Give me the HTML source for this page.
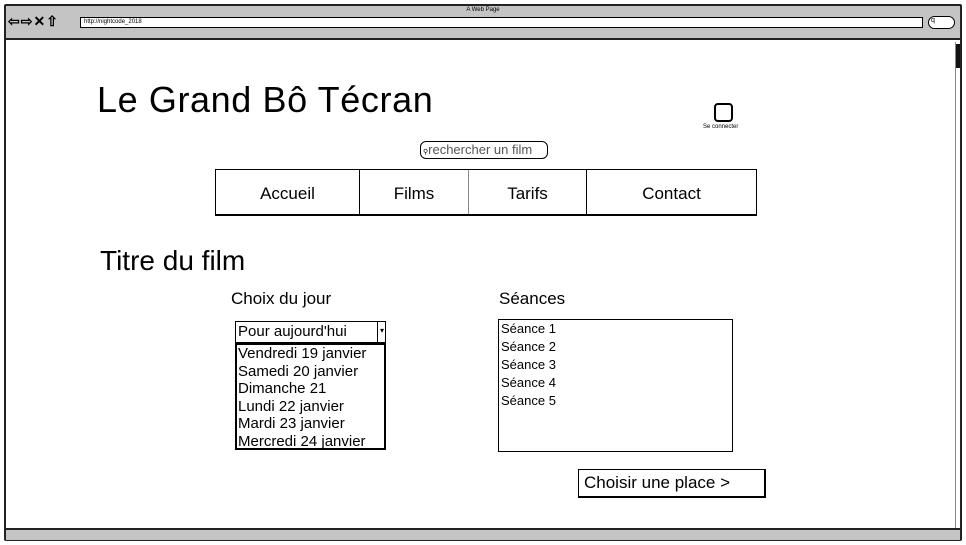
<!DOCTYPE html>
<html><head><meta charset="utf-8"><style>
*{margin:0;padding:0;box-sizing:border-box}
body{width:966px;height:545px;background:#fff;position:relative;overflow:hidden;font-family:"Liberation Sans",sans-serif;color:#000}
.a{position:absolute}
.b{border:1.5px solid #000}
</style></head><body>
<div class="a" style="left:4px;top:4px;width:958px;height:537px;border:2px solid #222;border-radius:2px"></div>
<div class="a" style="left:6px;top:6px;width:954px;height:34px;background:#c4c4c4;border-bottom:2px solid #222"></div>
<div class="a" style="left:0;top:7px;width:966px;text-align:center;font-size:6px">A Web Page</div>
<div class="a" style="left:8px;top:13px;font-size:14px;font-weight:bold;letter-spacing:1px">⇦⇨✕⇧</div>
<div class="a" style="left:80px;top:17px;width:843px;height:11px;background:#fff;border:1.5px solid #000;font-size:6px;padding-left:3px;line-height:8px">http://nightcode_2018</div>
<div class="a" style="left:928px;top:16px;width:27px;height:13px;background:#fff;border:1.5px solid #000;border-radius:7px;font-size:7px;padding-left:2px">q</div>
<div class="a" style="left:955px;top:42px;width:5px;height:486px;border-left:1px solid #888"></div>
<div class="a" style="left:956px;top:44px;width:4px;height:24px;background:#111"></div>
<div class="a" style="left:6px;top:528px;width:954px;height:12px;background:#c4c4c4;border-top:2px solid #222"></div>
<div class="a" style="left:97px;top:79px;font-size:36px;letter-spacing:0.6px;white-space:nowrap">Le Grand Bô Técran</div>
<div class="a b" style="left:714px;top:103px;width:19px;height:19px;border-radius:4px;border-width:2px"></div>
<div class="a" style="left:703px;top:124px;font-size:6px">Se connecter</div>
<div class="a" style="left:420px;top:141px;width:128px;height:18px;background:#fff;border:1.5px solid #000;border-radius:6px;font-size:13px;color:#555;line-height:15px;padding-left:2px;white-space:nowrap"><span style="font-size:7px;color:#000">⚲</span>rechercher un film</div>
<div class="a" style="left:215px;top:169px;width:542px;height:47px;border:1.5px solid #000;border-bottom-width:2.5px;display:flex;font-size:17px;line-height:48px;text-align:center">
<div style="width:144px;border-right:1.5px solid #000">Accueil</div>
<div style="width:109px;border-right:1.5px solid #888">Films</div>
<div style="width:118px;border-right:1.5px solid #000">Tarifs</div>
<div style="flex:1">Contact</div></div>
<div class="a" style="left:100px;top:245px;font-size:28px">Titre du film</div>
<div class="a" style="left:231px;top:289px;font-size:17px">Choix du jour</div>
<div class="a" style="left:499px;top:289px;font-size:17px">Séances</div>
<div class="a b" style="left:235px;top:321px;width:151px;height:22px;font-size:15px;line-height:19px;padding-left:2px">Pour aujourd'hui<span class="a" style="left:141px;top:-1.5px;width:9px;height:22px;border-left:1px solid #000;font-size:8px;text-align:center">▾</span></div>
<div class="a b" style="left:235px;top:343px;width:151px;height:107px;border-width:2px;font-size:15px;line-height:17.5px;padding-left:1px;white-space:nowrap">Vendredi 19 janvier<br>Samedi 20 janvier<br>Dimanche 21<br>Lundi 22 janvier<br>Mardi 23 janvier<br>Mercredi 24 janvier</div>
<div class="a b" style="left:498px;top:319px;width:235px;height:133px;font-size:13px;line-height:18px;padding-left:2px">Séance 1<br>Séance 2<br>Séance 3<br>Séance 4<br>Séance 5</div>
<div class="a b" style="left:578px;top:469px;width:188px;height:29px;border-bottom-width:2.5px;border-right-width:2.5px;font-size:17px;line-height:26px;padding-left:5px;white-space:nowrap">Choisir une place &gt;</div>
</body></html>
